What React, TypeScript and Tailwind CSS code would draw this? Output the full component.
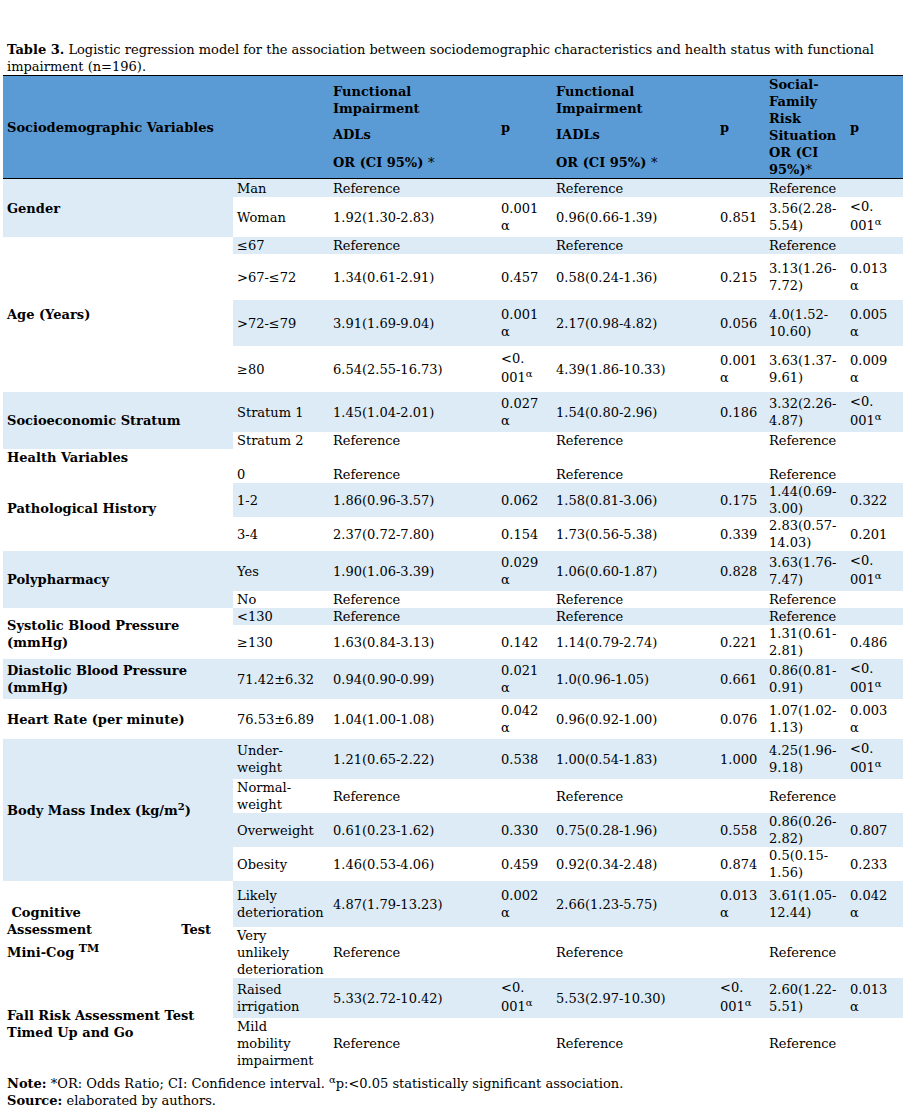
import type { ReactNode } from "react";

type Row = {
  h: string;
  shade: boolean;
  cells: ReactNode[];
};

type Group = {
  label: ReactNode;
  shade: boolean;
  rows: Row[];
};

// p value followed by alpha on its own line
const pa = (v: string) => (
  <>
    {v}
    <br />α
  </>
);

// "<0.001" wrapped with superscript alpha
const lt = (
  <>
    <div>&lt;0.</div>
    <div className="leading-[22px]">
      001<sup className="text-[10px]">α</sup>
    </div>
  </>
);

const two = (a: string, b: string) => (
  <>
    {a}
    <br />
    {b}
  </>
);

const ref3 = (sub: ReactNode): ReactNode[] => [sub, "Reference", "", "Reference", "", "Reference", ""];

const groups: Group[] = [
  {
    label: "Gender",
    shade: true,
    rows: [
      { h: "h-[18px]", shade: true, cells: ref3("Man") },
      {
        h: "h-[40px]",
        shade: false,
        cells: ["Woman", "1.92(1.30-2.83)", pa("0.001"), "0.96(0.66-1.39)", "0.851", two("3.56(2.28-", "5.54)"), lt],
      },
    ],
  },
  {
    label: "Age (Years)",
    shade: false,
    rows: [
      { h: "h-[17px]", shade: true, cells: ref3("≤67") },
      {
        h: "h-[46px]",
        shade: false,
        cells: [">67-≤72", "1.34(0.61-2.91)", "0.457", "0.58(0.24-1.36)", "0.215", two("3.13(1.26-", "7.72)"), pa("0.013")],
      },
      {
        h: "h-[46px]",
        shade: true,
        cells: [">72-≤79", "3.91(1.69-9.04)", pa("0.001"), "2.17(0.98-4.82)", "0.056", two("4.0(1.52-", "10.60)"), pa("0.005")],
      },
      {
        h: "h-[46px]",
        shade: false,
        cells: ["≥80", "6.54(2.55-16.73)", lt, "4.39(1.86-10.33)", pa("0.001"), two("3.63(1.37-", "9.61)"), pa("0.009")],
      },
    ],
  },
  {
    label: "Socioeconomic Stratum",
    shade: true,
    rows: [
      {
        h: "h-[40px]",
        shade: true,
        cells: ["Stratum 1", "1.45(1.04-2.01)", pa("0.027"), "1.54(0.80-2.96)", "0.186", two("3.32(2.26-", "4.87)"), lt],
      },
      { h: "h-[17px]", shade: false, cells: ref3("Stratum 2") },
    ],
  },
  {
    label: "Health Variables",
    shade: false,
    rows: [{ h: "h-[17px]", shade: false, cells: ["", "", "", "", "", "", ""] }],
  },
  {
    label: "Pathological History",
    shade: false,
    rows: [
      { h: "h-[17px]", shade: false, cells: ref3("0") },
      {
        h: "h-[34px]",
        shade: true,
        cells: ["1-2", "1.86(0.96-3.57)", "0.062", "1.58(0.81-3.06)", "0.175", two("1.44(0.69-", "3.00)"), "0.322"],
      },
      {
        h: "h-[34px]",
        shade: false,
        cells: ["3-4", "2.37(0.72-7.80)", "0.154", "1.73(0.56-5.38)", "0.339", two("2.83(0.57-", "14.03)"), "0.201"],
      },
    ],
  },
  {
    label: "Polypharmacy",
    shade: true,
    rows: [
      {
        h: "h-[40px]",
        shade: true,
        cells: ["Yes", "1.90(1.06-3.39)", pa("0.029"), "1.06(0.60-1.87)", "0.828", two("3.63(1.76-", "7.47)"), lt],
      },
      { h: "h-[17px]", shade: false, cells: ref3("No") },
    ],
  },
  {
    label: two("Systolic Blood Pressure", "(mmHg)"),
    shade: false,
    rows: [
      { h: "h-[17px]", shade: true, cells: ref3("<130") },
      {
        h: "h-[34px]",
        shade: false,
        cells: ["≥130", "1.63(0.84-3.13)", "0.142", "1.14(0.79-2.74)", "0.221", two("1.31(0.61-", "2.81)"), "0.486"],
      },
    ],
  },
  {
    label: two("Diastolic Blood Pressure", "(mmHg)"),
    shade: true,
    rows: [
      {
        h: "h-[40px]",
        shade: true,
        cells: ["71.42±6.32", "0.94(0.90-0.99)", pa("0.021"), "1.0(0.96-1.05)", "0.661", two("0.86(0.81-", "0.91)"), lt],
      },
    ],
  },
  {
    label: "Heart Rate (per minute)",
    shade: false,
    rows: [
      {
        h: "h-[40px]",
        shade: false,
        cells: ["76.53±6.89", "1.04(1.00-1.08)", pa("0.042"), "0.96(0.92-1.00)", "0.076", two("1.07(1.02-", "1.13)"), pa("0.003")],
      },
    ],
  },
  {
    label: (
      <>
        Body Mass Index (kg/m<sup className="text-[10px]">2</sup>)
      </>
    ),
    shade: true,
    rows: [
      {
        h: "h-[40px]",
        shade: true,
        cells: [two("Under-", "weight"), "1.21(0.65-2.22)", "0.538", "1.00(0.54-1.83)", "1.000", two("4.25(1.96-", "9.18)"), lt],
      },
      { h: "h-[34px]", shade: false, cells: ref3(two("Normal-", "weight")) },
      {
        h: "h-[34px]",
        shade: true,
        cells: ["Overweight", "0.61(0.23-1.62)", "0.330", "0.75(0.28-1.96)", "0.558", two("0.86(0.26-", "2.82)"), "0.807"],
      },
      {
        h: "h-[34px]",
        shade: false,
        cells: ["Obesity", "1.46(0.53-4.06)", "0.459", "0.92(0.34-2.48)", "0.874", two("0.5(0.15-", "1.56)"), "0.233"],
      },
    ],
  },
  {
    label: (
      <div className="w-[204px] pt-[6px]">
        <div>&nbsp;Cognitive</div>
        <div className="flex justify-between">
          <span>Assessment</span>
          <span>Test</span>
        </div>
        <div className="mt-[6px]">
          Mini-Cog <sup className="text-[11px]">TM</sup>
        </div>
      </div>
    ),
    shade: false,
    rows: [
      {
        h: "h-[46px]",
        shade: true,
        cells: [two("Likely", "deterioration"), "4.87(1.79-13.23)", pa("0.002"), "2.66(1.23-5.75)", pa("0.013"), two("3.61(1.05-", "12.44)"), pa("0.042")],
      },
      {
        h: "h-[51px]",
        shade: false,
        cells: ref3(
          <>
            Very
            <br />
            unlikely
            <br />
            deterioration
          </>
        ),
      },
    ],
  },
  {
    label: two("Fall Risk Assessment Test", "Timed Up and Go"),
    shade: false,
    rows: [
      {
        h: "h-[40px]",
        shade: true,
        cells: [two("Raised", "irrigation"), "5.33(2.72-10.42)", lt, "5.53(2.97-10.30)", lt, two("2.60(1.22-", "5.51)"), pa("0.013")],
      },
      {
        h: "h-[51px]",
        shade: false,
        cells: ref3(
          <>
            Mild
            <br />
            mobility
            <br />
            impairment
          </>
        ),
      },
    ],
  },
];

const th = "text-left align-middle px-1 font-bold bg-[#5b9bd5] border-t border-b border-black";

export default function App() {
  return (
    <div className="min-h-screen bg-white text-black text-[13px] leading-[17px] font-['DejaVu_Serif',serif]">
      <div className="ml-[3px] w-[900px] pt-[41px]">
        <p className="px-1 leading-[17px]">
          <b>Table 3.</b> Logistic regression model for the association between sociodemographic characteristics and
          health status with functional impairment (n=196).
        </p>

        <table className="w-[900px] table-fixed border-separate border-spacing-0">
          <colgroup>
            <col className="w-[230px]" />
            <col className="w-[96px]" />
            <col className="w-[168px]" />
            <col className="w-[55px]" />
            <col className="w-[164px]" />
            <col className="w-[49px]" />
            <col className="w-[81px]" />
            <col className="w-[57px]" />
          </colgroup>
          <thead>
            <tr className="h-[103px]">
              <th colSpan={2} className={th}>
                Sociodemographic Variables
              </th>
              <th className={th}>
                <div>
                  Functional
                  <br />
                  Impairment
                </div>
                <div className="mt-[9px]">ADLs</div>
                <div className="mt-[11px]">
                  OR (CI 95%) <span className="font-normal">*</span>
                </div>
              </th>
              <th className={th}>p</th>
              <th className={th}>
                <div>
                  Functional
                  <br />
                  Impairment
                </div>
                <div className="mt-[9px]">IADLs</div>
                <div className="mt-[11px]">
                  OR (CI 95%) <span className="font-normal">*</span>
                </div>
              </th>
              <th className={th}>p</th>
              <th className={th}>
                Social-
                <br />
                Family
                <br />
                Risk
                <br />
                Situation
                <br />
                OR (CI
                <br />
                95%)<span className="font-normal">*</span>
              </th>
              <th className={th}>p</th>
            </tr>
          </thead>
          <tbody>
            {groups.map((g) =>
              g.rows.map((r, i) => (
                <tr key={String(g.label) + i} className={r.h}>
                  {i === 0 && (
                    <td
                      rowSpan={g.rows.length}
                      className={`px-1 p-0 align-middle font-bold ${g.shade ? "bg-[#ddebf7]" : "bg-white"}`}
                    >
                      {g.label}
                    </td>
                  )}
                  {r.cells.map((c, j) => (
                    <td
                      key={j}
                      className={`px-1 py-0 align-middle whitespace-nowrap ${r.shade ? "bg-[#ddebf7]" : "bg-white"}`}
                    >
                      {c}
                    </td>
                  ))}
                </tr>
              ))
            )}
          </tbody>
        </table>

        <div className="mt-[6px] px-1">
          <div>
            <b>Note:</b> *OR: Odds Ratio; CI: Confidence interval. <sup className="text-[10px]">α</sup>p:&lt;0.05
            statistically significant association.
          </div>
          <div>
            <b>Source:</b> elaborated by authors.
          </div>
        </div>
      </div>
    </div>
  );
}
